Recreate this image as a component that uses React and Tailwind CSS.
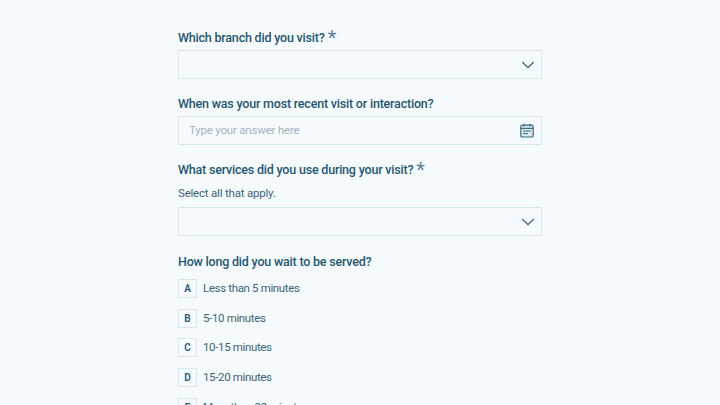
import { ChevronDown } from "lucide-react";

function Question({ text, required }) {
  return (
    <div className="h-[20px] flex items-center text-[12.5px] tracking-[-0.2px] leading-[20px] font-medium text-[#27566f]">
      {text}
      {required && <span className="ml-[3px] h-[20px] text-[20px] leading-[20px] font-normal text-[#5f8598]">*</span>}
    </div>
  );
}

function SelectBox() {
  return (
    <div className="h-[29px] w-[364px] flex items-center justify-end pr-[2.5px] border border-[#d8e8ec] bg-[#f5fbfe]">
      <ChevronDown size={22} strokeWidth={1.2} className="text-[#3d6377]" />
    </div>
  );
}

function CalendarIcon() {
  return (
    <svg width="14" height="15" viewBox="0 0 14 15" fill="none" stroke="#3d6a80" strokeWidth="1.2">
      <rect x="0.8" y="2.2" width="12.4" height="11.8" rx="1.6" fill="#dbe8ee" />
      <path d="M0.8 5.4h12.4" />
      <path d="M4 0.8v2.6M10 0.8v2.6" />
      <path d="M3 8h8M3 10.6h5" strokeWidth="1" />
    </svg>
  );
}

function Choice({ letter, label }) {
  return (
    <div className="flex items-center h-[19px] shrink-0">
      <div className="w-[19px] h-[19px] flex items-center justify-center border border-[#d8e8ec] text-[10px] font-semibold text-[#2c5870]">
        {letter}
      </div>
      <span className="ml-[6px] text-[11.5px] tracking-[-0.35px] whitespace-nowrap text-[#3d6377]">{label}</span>
    </div>
  );
}

export default function App() {
  const choices = [
    ["A", "Less than 5 minutes"],
    ["B", "5-10 minutes"],
    ["C", "10-15 minutes"],
    ["D", "15-20 minutes"],
    ["E", "More than 20 minutes"],
  ];

  return (
    <div className="h-[405px] w-[720px] overflow-hidden bg-[#f5fbfe] font-['Roboto',sans-serif]">
      <div className="w-[364px] mx-auto pt-[28px] flex flex-col">
        <Question text="Which branch did you visit?" required />
        <div className="mt-[2px]">
          <SelectBox />
        </div>

        <div className="mt-[15px]">
          <Question text="When was your most recent visit or interaction?" />
        </div>
        <div className="mt-[2px] h-[29px] w-[364px] flex items-center justify-between pl-[10px] pr-[7px] border border-[#d8e8ec]">
          <span className="text-[11.5px] tracking-[-0.2px] text-[#a3b5be]">Type your answer here</span>
          <CalendarIcon />
        </div>

        <div className="mt-[15px]">
          <Question text="What services did you use during your visit?" required />
        </div>
        <div className="mt-[4px] text-[11.5px] tracking-[-0.2px] leading-[18px] text-[#3d6377]">Select all that apply.</div>
        <div className="mt-[5px]">
          <SelectBox />
        </div>

        <div className="mt-[16px]">
          <Question text="How long did you wait to be served?" />
        </div>
        <div className="mt-[7px] flex flex-col gap-[10.67px]">
          {choices.map(([letter, label]) => (
            <Choice key={letter} letter={letter} label={label} />
          ))}
        </div>
      </div>
    </div>
  );
}
